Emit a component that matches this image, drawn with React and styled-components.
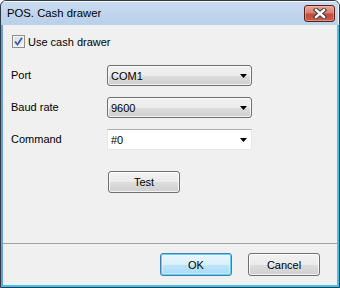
import React from "react";
import styled, { createGlobalStyle, css } from "styled-components";

const GlobalStyle = createGlobalStyle`
  html, body { margin: 0; padding: 0; background: #ffffff; }
  #root { width: 340px; height: 288px; }
  * { box-sizing: border-box; }
`;

const Window = styled.div`
  width: 340px;
  height: 288px;
  border: 1px solid #2e3a46;
  border-radius: 6px 6px 0 0;
  background: linear-gradient(#c9dbef, #b9d0ea 24px, #b9d0ea);
  display: flex;
  flex-direction: column;
  overflow: hidden;
  font-family: "Liberation Sans", Arial, sans-serif;
  font-size: 11px;
  color: #000;
`;

const TitleBar = styled.div`
  height: 24px;
  flex: none;
  display: flex;
  align-items: flex-start;
  justify-content: space-between;
  padding: 0 4px 0 6px;
  box-shadow: inset 0 1px 0 rgba(255, 255, 255, 0.8), inset -1px 0 0 rgba(255, 255, 255, 0.7);
`;

const Title = styled.div`
  font-size: 11.3px;
  line-height: 24px;
  color: #000;
`;

const CloseButton = styled.div`
  margin-top: 4px;
  width: 31px;
  height: 17px;
  border: 1px solid #5a1f1a;
  border-radius: 3px;
  background: linear-gradient(#e8a597 0%, #d9806f 45%, #c24a3a 55%, #c9604e 100%);
  box-shadow: inset 0 0 0 1px rgba(255, 200, 190, 0.45);
  display: flex;
  align-items: center;
  justify-content: center;
`;

const Frame = styled.div`
  flex: 1;
  display: flex;
  border-left: 2px solid #6b9fd4;
  border-right: 2px solid #3cc4ee;
  border-bottom: 2px solid #3cc4ee;
`;

const Client = styled.div`
  flex: 1;
  background: #f0f0f0;
  display: flex;
  flex-direction: column;
`;

const Content = styled.div`
  flex: 1;
  padding: 10px 0 0 8px;
  display: flex;
  flex-direction: column;
`;

const CheckRow = styled.label`
  display: flex;
  align-items: center;
  gap: 3px;
  height: 13px;
  margin-left: 1px;
`;

const CheckBox = styled.span`
  width: 13px;
  height: 13px;
  border: 1px solid #8e8f8f;
  background: linear-gradient(135deg, #dcdcdc, #f4f4f4);
  box-shadow: inset 0 0 0 1px #f4f4f4;
  display: flex;
  align-items: center;
  justify-content: center;
`;

const FormGrid = styled.div`
  margin-top: 17px;
  display: grid;
  grid-template-columns: 96px 145px;
  grid-auto-rows: 21px;
  row-gap: 11px;
  align-items: center;
`;

const Label = styled.div`
  line-height: 21px;
`;

const Combo = styled.div`
  height: 21px;
  display: flex;
  align-items: center;
  justify-content: space-between;
  padding: 0 4px 0 3px;
  ${(p) =>
    p.$editable
      ? css`
          background: #ffffff;
          border: 1px solid #e3e9ef;
          border-top-color: #abadb3;
        `
      : css`
          border: 1px solid #707070;
          border-radius: 3px;
          background: linear-gradient(#f2f2f2 0%, #ebebeb 50%, #dddddd 51%, #cfcfcf 100%);
          box-shadow: inset 0 0 0 1px rgba(255, 255, 255, 0.7);
        `}
`;

const Arrow = () => (
  <svg width="7" height="4" viewBox="0 0 7 4">
    <path d="M0 0H7L3.5 4Z" fill="#000" />
  </svg>
);

const TestRow = styled.div`
  margin-top: 21px;
  padding-left: 97px;
  display: flex;
`;

const Button = styled.div`
  width: 72px;
  height: ${(p) => p.$h || 22}px;
  display: flex;
  align-items: center;
  justify-content: center;
  border-radius: 3px;
  font-size: 11px;
  ${(p) =>
    p.$default
      ? css`
          border: 1px solid #3c7fb1;
          background: linear-gradient(#eaf6fd 0%, #d9f0fc 50%, #bee6fd 51%, #a7d9f5 100%);
          box-shadow: inset 0 0 0 1px #5fd0f6, inset 0 0 0 2px rgba(255, 255, 255, 0.35);
        `
      : css`
          border: 1px solid #707070;
          background: linear-gradient(#f2f2f2 0%, #ebebeb 50%, #dddddd 51%, #cfcfcf 100%);
          box-shadow: inset 0 0 0 1px rgba(255, 255, 255, 0.75);
        `}
`;

const Footer = styled.div`
  height: 42px;
  flex: none;
  border-top: 1px solid #a0a0a0;
  display: flex;
  justify-content: flex-end;
  align-items: flex-start;
  gap: 16px;
  padding: 9px 17px 0 0;
`;

export default function App() {
  return (
    <>
      <GlobalStyle />
      <Window>
        <TitleBar>
          <Title>POS. Cash drawer</Title>
          <CloseButton>
            <svg width="14" height="11" viewBox="0 0 14 11">
              <path d="M3 2L11 9M11 2L3 9" stroke="#3b3b3b" strokeWidth="4.4" strokeLinecap="square" />
              <path d="M3 2L11 9M11 2L3 9" stroke="#ffffff" strokeWidth="2.4" strokeLinecap="square" />
            </svg>
          </CloseButton>
        </TitleBar>
        <Frame>
          <Client>
            <Content>
              <CheckRow>
                <CheckBox>
                  <svg width="9" height="9" viewBox="0 0 9 9">
                    <path d="M1 4.5L3.5 7.5L8 0.8" stroke="#3c5bb4" strokeWidth="1.8" fill="none" />
                  </svg>
                </CheckBox>
                <span>Use cash drawer</span>
              </CheckRow>
              <FormGrid>
                <Label>Port</Label>
                <Combo>
                  <span>COM1</span>
                  <Arrow />
                </Combo>
                <Label>Baud rate</Label>
                <Combo>
                  <span>9600</span>
                  <Arrow />
                </Combo>
                <Label>Command</Label>
                <Combo $editable>
                  <span>#0</span>
                  <Arrow />
                </Combo>
              </FormGrid>
              <TestRow>
                <Button>Test</Button>
              </TestRow>
            </Content>
            <Footer>
              <Button $default $h={23}>OK</Button>
              <Button $h={23}>Cancel</Button>
            </Footer>
          </Client>
        </Frame>
      </Window>
    </>
  );
}
